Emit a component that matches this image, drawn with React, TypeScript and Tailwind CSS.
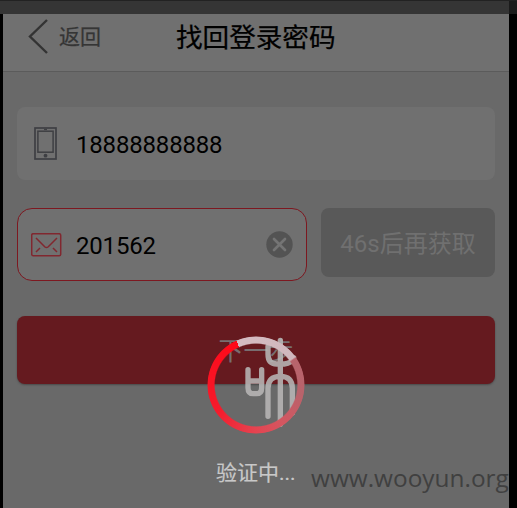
import React from "react";

function PhoneIcon() {
  return (
    <svg className="h-[33px] w-[23px] shrink-0" viewBox="0 0 23 33" fill="none" stroke="#3e3f43">
      <rect x="1" y="1" width="21" height="31" strokeWidth="1.7" />
      <rect x="3.9" y="4.2" width="15.2" height="21" strokeWidth="1.5" />
      <path d="M10 2.5h3" strokeWidth="1.2" />
      <circle cx="11.5" cy="28.7" r="1.9" fill="#3e3f43" stroke="none" />
    </svg>
  );
}

function MailIcon() {
  return (
    <svg className="h-6 w-[31px] shrink-0" viewBox="0 0 31 24" fill="none" stroke="#81272f" strokeWidth="1.5">
      <rect x="0.7" y="0.7" width="29" height="22" rx="1.5" />
      <path d="M5 5l9 9q1.5 1.2 3 0l9-9M5 19l4-4M26 19l-4-4" />
    </svg>
  );
}

function Loader() {
  return (
    <div className="relative h-[98px] w-[98px]">
      <svg className="absolute inset-0 h-full w-full" viewBox="36 33 294 294" fill="none" strokeLinecap="round">
        <g stroke="#b8b6b6" strokeWidth="16" opacity="0.88">
          <path d="M159 134V188Q159 206 175 206H184Q200 206 200 188V134M159 168H200" />
          <path d="M219 64V88Q219 117 245 117H268Q290 115 296 98M256 46V298M219 274V190Q219 154 256 154Q292 154 292 190V264" />
        </g>
      </svg>
      <div className="absolute inset-0 rounded-full bg-[conic-gradient(from_-24deg,#d5bcc2_0deg,#d0b7bd_78deg,#b8646c_80deg,#b8636b_125deg,#d45660_170deg,#e54350_205deg,#f51b2c_260deg,#ff0818_360deg)] [mask-image:radial-gradient(circle,transparent_40.8px,black_42px,black_48px,transparent_49px)]" />
    </div>
  );
}

export default function App() {
  return (
    <div className="relative h-[508px] w-[517px] overflow-hidden bg-black font-['Roboto','Noto_Sans_CJK_SC',sans-serif]">
      <div className="flex h-[14px] border-t border-[#222] bg-[#1b1b1b]">
        <div className="mr-2 flex-1 bg-[#353535]" />
      </div>
      <div className="ml-[3px] mr-2 h-[494px] bg-[#696969]">
        <header className="flex h-[58px] items-start border-b border-[#5b5b5b] bg-[#707070] pl-[25px]">
          <svg className="mt-[5px] h-[35px] w-5" viewBox="0 0 20 35" fill="none" stroke="#333" strokeWidth="2.4">
            <path d="M19 1L2 17.5L19 34" />
          </svg>
          <span className="ml-[11px] mt-2 text-[21px] leading-[30px] text-[#353535] [-webkit-text-stroke:0.25px_#353535]">返回</span>
          <h1 className="ml-[75px] mt-[5px] text-[26.6px] font-normal leading-[38px] text-black [-webkit-text-stroke:0.25px_black]">找回登录密码</h1>
        </header>
        <main className="px-[14px] pt-[35px]">
          <div className="flex h-[73px] items-center rounded-lg bg-[#707070] pl-[17px]">
            <PhoneIcon />
            <span className="ml-[19px] mt-[2px] text-[24px] leading-8 tracking-[-0.18px] text-black">18888888888</span>
          </div>
          <div className="mt-7 flex items-start gap-[14px]">
            <div className="flex h-[73px] w-[290px] items-center rounded-[15px] border border-[#7d1820] bg-[#707070] pl-[13px] pr-[13px]">
              <MailIcon />
              <span className="ml-[14px] mt-[2px] text-[24px] leading-8 tracking-[-0.18px] text-black">201562</span>
              <svg className="ml-auto h-[27px] w-[27px]" viewBox="0 0 27 27" fill="none">
                <circle cx="13.5" cy="13.5" r="13.2" fill="#535353" />
                <path d="M8 8l11 11M19 8L8 19" stroke="#747474" strokeWidth="2.7" strokeLinecap="round" />
              </svg>
            </div>
            <button className="h-[69px] w-[174px] rounded-lg bg-[#595959] pt-[3px] text-[24px] text-[#707070]">46s后再获取</button>
          </div>
          <button className="mt-[35px] block h-[68px] w-full rounded-lg bg-[#651a1f] pt-[3px] text-[25px] text-[#786e70] shadow-[0_1px_2px_#4a4a4a]">下一步</button>
        </main>
      </div>
      <div className="absolute left-[207px] top-[336px]">
        <Loader />
      </div>
      <p className="absolute left-[216px] top-[458px] text-[21px] leading-[30px] text-[#c8c8c8] [-webkit-text-stroke:0.2px_#c8c8c8]">验证中...</p>
      <p className="absolute left-[311px] top-[461px] font-['Open_Sans','Noto_Sans',sans-serif] text-[24.4px] leading-[34px] text-[#404040]">www.wooyun.org</p>
    </div>
  );
}
